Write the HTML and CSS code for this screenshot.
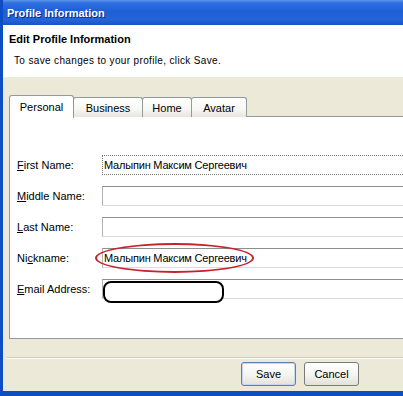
FILE: index.html
```html
<!DOCTYPE html>
<html lang="ru">
<head>
  <meta charset="UTF-8" />
  <title>Profile Information</title>
  <link rel="stylesheet" href="styles.css">
</head>
<body>
  <div class="window">
    <div class="titlebar">Profile Information</div>

    <div class="header">
      <h1>Edit Profile Information</h1>
      <p>To save changes to your profile, click Save.</p>
    </div>

    <div class="content">
      <div class="tabs">
        <div class="tab tab-active tab-personal">Personal</div>
        <div class="tab tab-business">Business</div>
        <div class="tab tab-home">Home</div>
        <div class="tab tab-avatar">Avatar</div>
      </div>

      <div class="panel">
        <div class="row">
          <label><u>F</u>irst Name:</label>
          <div class="field">
            <input type="text" class="input input-focus" value="Малыпин Максим Сергеевич" readonly>
          </div>
        </div>
        <div class="row">
          <label><u>M</u>iddle Name:</label>
          <div class="field"><input type="text" class="input" value="" readonly></div>
        </div>
        <div class="row">
          <label><u>L</u>ast Name:</label>
          <div class="field"><input type="text" class="input" value="" readonly></div>
        </div>
        <div class="row">
          <label>Ni<u>c</u>kname:</label>
          <div class="field">
            <input type="text" class="input" value="Малыпин Максим Сергеевич" readonly>
            <span class="mark-ellipse"></span>
          </div>
        </div>
        <div class="row">
          <label><u>E</u>mail Address:</label>
          <div class="field">
            <input type="text" class="input" value="" readonly>
            <span class="mark-hidden"></span>
          </div>
        </div>
      </div>

      <div class="separator"></div>

      <div class="buttons">
        <button class="btn btn-default">Save</button>
        <button class="btn">Cancel</button>
      </div>
    </div>
  </div>
</body>
</html>
```

FILE: styles.css
```css
:root {
  --xp-blue: #0d4fc2;
  --face: #ece9d8;
  --tab-border: #919b9c;
  --text: #000000;
}

* {
  box-sizing: border-box;
  margin: 0;
  padding: 0;
}

body {
  width: 403px;
  height: 396px;
  overflow: hidden;
  background: var(--face);
  font-family: "Liberation Sans", Arial, sans-serif;
  font-size: 11px;
  color: var(--text);
}

/* the window is wider than the shot, so its right edge is cut off */
.window {
  width: 403px;
  height: 396px;
  overflow: hidden;
  display: flex;
  flex-direction: column;
  border-left: 3px solid var(--xp-blue);
  border-bottom: 5px solid var(--xp-blue);
  background: var(--face);
}

/* title bar */
.titlebar {
  height: 25px;
  line-height: 27px;
  padding-left: 4px;
  color: #ffffff;
  font-weight: bold;
  font-size: 11px;
  text-shadow: 1px 1px 0 #0a2a80;
  background: linear-gradient(to bottom, #5a96ea 0%, #2f6fe0 12%, #1f5fd6 45%, #2364d8 80%, #1a52c4 100%);
}

/* white header */
.header {
  height: 52px;
  background: #ffffff;
  padding: 8px 0 0 6px;
}

.header h1 {
  font-size: 11px;
  font-weight: bold;
  line-height: 13px;
}

.header p {
  margin-top: 8px;
  padding-left: 5px;
  line-height: 13px;
  font-size: 10px;
  letter-spacing: 0.35px;
}

/* tabs + panel */
.content {
  flex: 1;
  padding: 18px 0 0 6px;
  display: flex;
  flex-direction: column;
}

.tabs {
  display: flex;
  align-items: flex-end;
  height: 22px;
  position: relative;
  z-index: 1;
}

.tab {
  height: 20px;
  line-height: 20px;
  text-align: center;
  border: 1px solid var(--tab-border);
  border-bottom: none;
  border-radius: 3px 3px 0 0;
  margin-left: -1px;
  background: linear-gradient(to bottom, #ffffff 0%, #f7f7f4 60%, #e6e4dc 100%);
}

.tab-active {
  margin-left: 0;
  margin-bottom: -1px;
  height: 23px;
  line-height: 22px;
  background: #ffffff;
}

.tab-personal { width: 65px; }
.tab-business { width: 70px; }
.tab-home { width: 50px; }
.tab-avatar { width: 56px; }

.panel {
  height: 223px;
  margin-top: -1px;
  background: #ffffff;
  border: 1px solid var(--tab-border);
  border-right: none;
  padding: 38px 0 0 7px;
  display: flex;
  flex-direction: column;
  gap: 11px;
}

.row {
  display: flex;
  align-items: center;
  height: 20px;
}

.row label {
  width: 85px;
  flex: none;
}

.field {
  position: relative;
  flex: 1;
  height: 20px;
}

.input {
  width: 100%;
  height: 20px;
  border: 1px solid #b3b3b3;
  border-top-color: #8e8e8e;
  border-bottom-color: #dcdcdc;
  border-right: none;
  background: #ffffff;
  font-family: inherit;
  font-size: 11px;
  letter-spacing: -0.2px;
  color: var(--text);
  padding: 0 1px;
  outline: none;
}

.input-focus {
  border: 1px dotted #7a7a7a;
  border-right: none;
}

/* annotations drawn over the screenshot */
.mark-ellipse {
  position: absolute;
  left: -7px;
  top: -5px;
  width: 159px;
  height: 30px;
  border: 2px solid #c8232c;
  border-radius: 50%;
}

.mark-hidden {
  position: absolute;
  left: 1px;
  top: 2px;
  width: 121px;
  height: 22px;
  border: 2px solid #000000;
  border-radius: 8px;
  background: #ffffff;
}

/* footer */
.separator {
  margin: 18px 0 0 -2px;
  border-top: 1px solid #cfccbd;
  border-bottom: 1px solid #ffffff;
}

.buttons {
  display: flex;
  gap: 8px;
  margin-top: 3px;
  padding-left: 232px;
}

.btn {
  width: 55px;
  height: 24px;
  font-family: inherit;
  font-size: 11px;
  color: var(--text);
  border: 1px solid #7a7a7a;
  border-radius: 3px;
  background: linear-gradient(to bottom, #ffffff 0%, #f4f4f0 55%, #e3e1d8 100%);
}

.btn-default {
  border-color: #5b7fb5;
  box-shadow: inset 0 0 0 1px #c4d6f2;
}
```
